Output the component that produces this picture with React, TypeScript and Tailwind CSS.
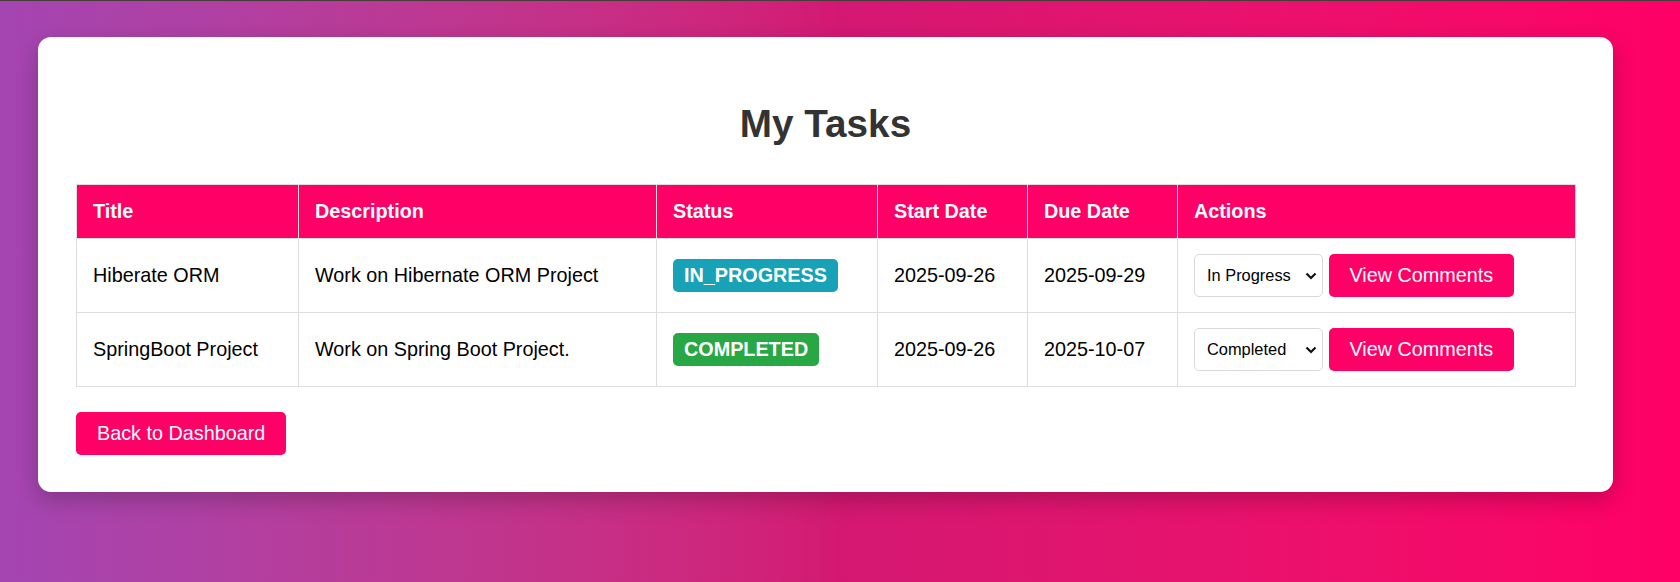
import { useState } from "react";

type Task = {
  id: number;
  title: string;
  description: string;
  status: "IN_PROGRESS" | "COMPLETED";
  startDate: string;
  dueDate: string;
};

const tasks: Task[] = [
  {
    id: 1,
    title: "Hiberate ORM",
    description: "Work on Hibernate ORM Project",
    status: "IN_PROGRESS",
    startDate: "2025-09-26",
    dueDate: "2025-09-29",
  },
  {
    id: 2,
    title: "SpringBoot Project",
    description: "Work on Spring Boot Project.",
    status: "COMPLETED",
    startDate: "2025-09-26",
    dueDate: "2025-10-07",
  },
];

function StatusSelect({ value }: { value: string }) {
  const [current, setCurrent] = useState(value);
  return (
    <div className="relative w-[129px] h-[43px]">
      <select
        value={current}
        onChange={(e) => setCurrent(e.target.value)}
        className="appearance-none w-full h-full border border-[#d9d9d9] rounded-[5px] bg-white pl-[12px] pr-[24px] text-[16.4px] text-black outline-none"
      >
        <option value="PENDING">Pending</option>
        <option value="IN_PROGRESS">In Progress</option>
        <option value="COMPLETED">Completed</option>
      </select>
      {/* native chevron */}
      <svg
        className="pointer-events-none absolute right-[6px] top-[18px]"
        width="12"
        height="8"
        viewBox="0 0 12 8"
        fill="none"
      >
        <path d="M1.5 1.5 L6 6 L10.5 1.5" stroke="#111" strokeWidth="2.2" />
      </svg>
    </div>
  );
}

export default function App() {
  const badge = (status: Task["status"]) =>
    status === "IN_PROGRESS" ? "bg-[#17a2b8]" : "bg-[#28a745]";

  return (
    <div className="min-h-screen border-t border-[#4a3b3b] bg-linear-to-r from-[#a445b2] via-[#d41872] to-[#ff0066] pt-[36px] pb-[40px] font-['Liberation_Sans',Arial,sans-serif]">
      <div className="ml-[38px] w-[1575px] bg-white rounded-[13px] shadow-[0_8px_22px_rgba(0,0,0,0.22)] px-[38px] pt-[38px] pb-[37px]">
        <h2 className="mt-[27px] mb-[38px] text-center text-[38.7px] leading-[44px] font-bold text-[#333]">
          My Tasks
        </h2>

        <table className="w-[1499px] table-fixed border-collapse text-[19.8px] leading-[23px]">
          <colgroup>
            <col className="w-[222px]" />
            <col className="w-[358px]" />
            <col className="w-[221px]" />
            <col className="w-[150px]" />
            <col className="w-[150px]" />
            <col className="w-[398px]" />
          </colgroup>
          <thead>
            <tr className="h-[54px] bg-[#ff0066] text-white">
              {["Title", "Description", "Status", "Start Date", "Due Date", "Actions"].map((h) => (
                <th key={h} className="border border-[#ddd] px-[16px] text-left font-bold">
                  {h}
                </th>
              ))}
            </tr>
          </thead>
          <tbody className="text-black">
            {tasks.map((task) => (
              <tr key={task.id} className="h-[74px]">
                <td className="border border-[#ddd] px-[16px]">{task.title}</td>
                <td className="border border-[#ddd] px-[16px]">{task.description}</td>
                <td className="border border-[#ddd] px-[16px]">
                  <span
                    className={`inline-block rounded-[5px] px-[11px] py-[5px] font-bold text-white ${badge(task.status)}`}
                  >
                    {task.status}
                  </span>
                </td>
                <td className="border border-[#ddd] px-[16px]">{task.startDate}</td>
                <td className="border border-[#ddd] px-[16px]">{task.dueDate}</td>
                <td className="border border-[#ddd] px-[16px]">
                  <div className="flex items-center gap-[6px]">
                    <StatusSelect value={task.status} />
                    <button className="h-[43px] rounded-[5px] bg-[#ff0066] px-[20.5px] text-white cursor-pointer">
                      View Comments
                    </button>
                  </div>
                </td>
              </tr>
            ))}
          </tbody>
        </table>

        <button className="mt-[25px] h-[43px] rounded-[5px] bg-[#ff0066] px-[21px] text-[19.8px] text-white cursor-pointer">
          Back to Dashboard
        </button>
      </div>
    </div>
  );
}
